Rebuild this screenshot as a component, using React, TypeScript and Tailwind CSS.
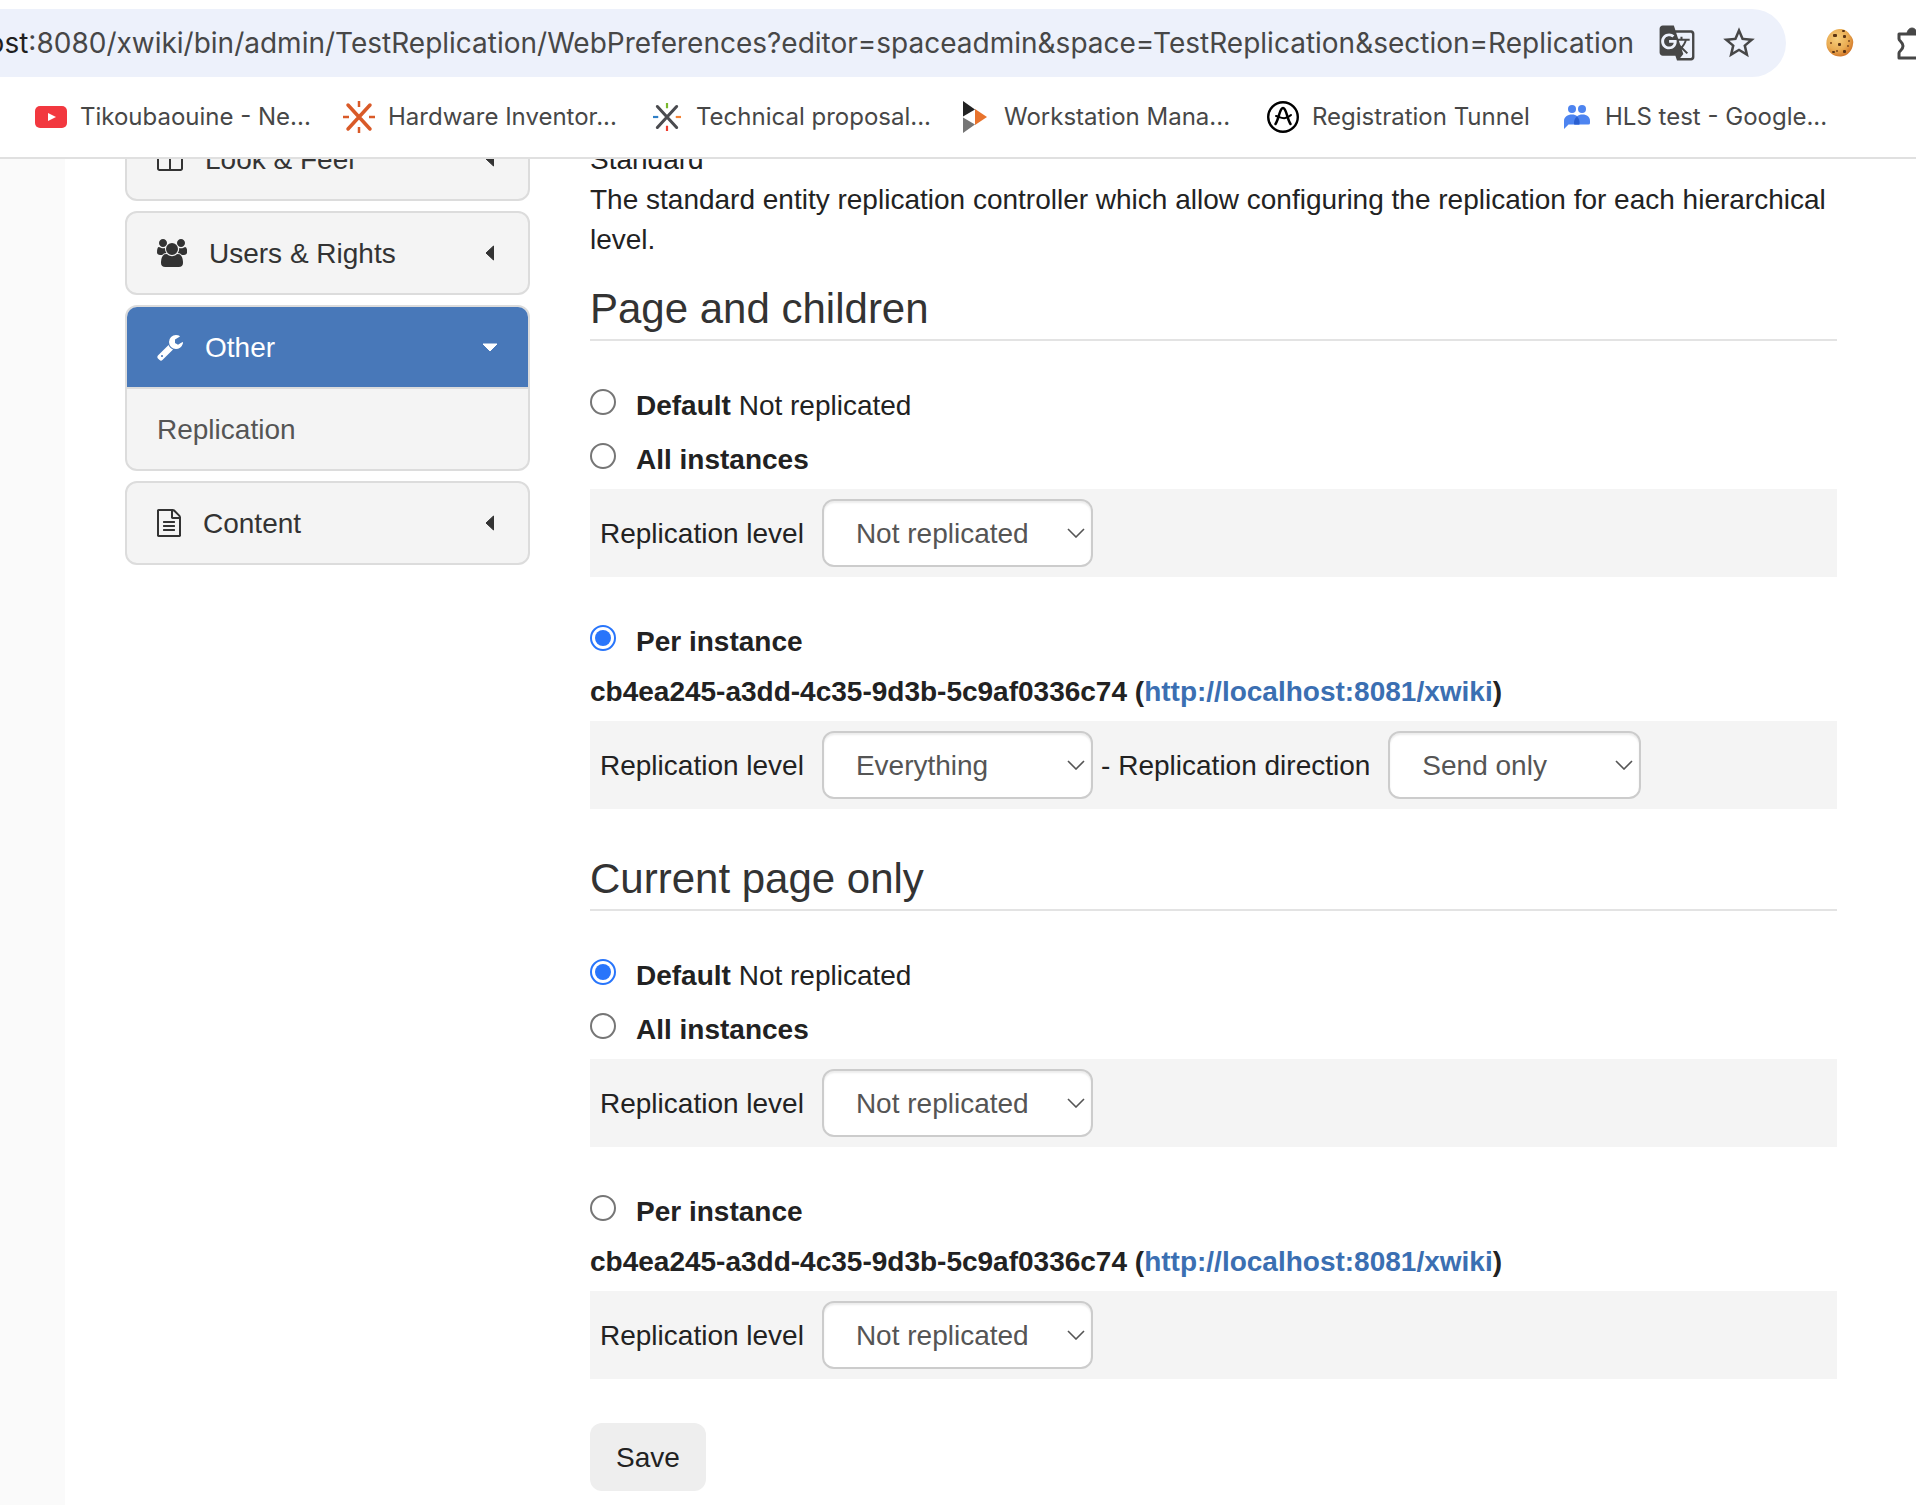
import React, { useState } from "react";
import { MdGTranslate, MdStarBorder } from "react-icons/md";

const LEVELS = ["Not replicated", "Reference", "Everything"];
const DIRECTIONS = ["Send only", "Receive only", "Both"];
const INSTANCE = "cb4ea245-a3dd-4c35-9d3b-5c9af0336c74";

const ICONS = {
  columns: {
    viewBox: "64 0 1664 1792",
    className: "h-7 w-[26px]",
    d: "M224 1536h608v-1152h-640v1120q0 13 9.5 22.5t22.5 9.5zm1376-32v-1120h-640v1152h608q13 0 22.5-9.5t9.5-22.5zm128-1216v1216q0 66-47 113t-113 47h-1344q-66 0-113-47t-47-113v-1216q0-66 47-113t113-47h1344q66 0 113 47t47 113z",
  },
  users: {
    viewBox: "64 0 1920 1792",
    className: "h-7 w-[30px]",
    d: "M657 896q-162 5-265 128h-134q-82 0-138-40.5t-56-118.5q0-353 124-353 6 0 43.5 21t97.5 42.5 119 21.5q67 0 133-23-5 37-5 66 0 159 93 256zm1071 637q0 120-73 189.5t-194 69.5h-874q-121 0-194-69.5t-73-189.5q0-53 3.5-103.5t14-109 26.5-108.5 43-97.5 62-81 85.5-53.5 111.5-20q10 0 43 21.5t73 48 107 48 135 21.5 135-21.5 107-48 73-48 43-21.5q61 0 111.5 20t85.5 53.5 62 81 43 97.5 26.5 108.5 14 109 3.5 103.5zm-1024-1277q0 106-75 181t-181 75-181-75-75-181 75-181 181-75 181 75 75 181zm704 384q0 159-112.5 271.5t-271.5 112.5-271.5-112.5-112.5-271.5 112.5-271.5 271.5-112.5 271.5 112.5 112.5 271.5zm576 225q0 78-56 118.5t-138 40.5h-134q-103-123-265-128 93-97 93-256 0-29-5-66 66 23 133 23 59 0 119-21.5t97.5-42.5 43.5-21q124 0 124 353zm-128-609q0 106-75 181t-181 75-181-75-75-181 75-181 181-75 181 75 75 181z",
  },
  wrench: {
    viewBox: "64 0 1664 1792",
    className: "h-7 w-[26px]",
    d: "M448 1472q0-26-19-45t-45-19-45 19-19 45 19 45 45 19 45-19 19-45zm644-420l-682 682q-37 37-90 37-52 0-91-37l-106-108q-38-36-38-90 0-53 38-91l681-681q39 98 114.5 173.5t173.5 114.5zm634-435q0 39-23 106-47 134-164.5 217.5t-258.5 83.5q-185 0-316.5-131.5t-131.5-316.5 131.5-316.5 316.5-131.5q58 0 121.5 16.5t107.5 46.5q16 11 16 28t-16 28l-293 169v224l193 107q5-3 79-48.5t135.5-81 70.5-35.5q15 0 23.5 10t8.5 25z",
  },
  file: {
    viewBox: "128 0 1536 1792",
    className: "h-7 w-6",
    d: "M1596 380q28 28 48 76t20 88v1152q0 40-28 68t-68 28h-1344q-40 0-68-28t-28-68v-1600q0-40 28-68t68-28h896q40 0 88 20t76 48zm-444-244v376h376q-10-29-22-41l-313-313q-12-12-41-22zm384 1528v-1024h-416q-40 0-68-28t-28-68v-416h-768v1536h1280zm-1024-864q0-14 9-23t23-9h704q14 0 23 9t9 23v64q0 14-9 23t-23 9h-704q-14 0-23-9t-9-23v-64zm736 224q14 0 23 9t9 23v64q0 14-9 23t-23 9h-704q-14 0-23-9t-9-23v-64q0-14 9-23t23-9h704zm0 256q14 0 23 9t9 23v64q0 14-9 23t-23 9h-704q-14 0-23-9t-9-23v-64q0-14 9-23t23-9h704z",
  },
};

function YoutubeIcon() {
  return (
    <svg viewBox="0 0 32 32" className="size-8">
      <rect y="5" width="32" height="22" rx="5" fill="#f2383f" />
      <path d="M13 12l8 4-8 4z" fill="#fff" />
    </svg>
  );
}

type SparkProps = { cross: string; top: string; right: string; bottom: string; left: string; className: string };

function SparkIcon({ cross, top, right, bottom, left, className }: SparkProps) {
  return (
    <svg viewBox="0 0 32 32" className={className} fill="none" strokeLinecap="round">
      <path d="M5 4l22 24M27 4L5 28" stroke={cross} strokeWidth="3.500" />
      <g strokeWidth="2.500" strokeLinecap="butt">
        <path d="M16 0v6" stroke={top} />
        <path d="M26 16h6" stroke={right} />
        <path d="M16 26v6" stroke={bottom} />
        <path d="M0 16h6" stroke={left} />
      </g>
    </svg>
  );
}

function PlayIcon() {
  return (
    <svg viewBox="0 0 32 32" className="size-8">
      <path d="M4 0l12 8.500-12 7z" fill="#222" />
      <path d="M4 16.500l12 7-12 8.500z" fill="#757575" />
      <path d="M16 8l12 8-12 8z" fill="#e8732c" />
    </svg>
  );
}

function CircleAIcon() {
  return (
    <svg viewBox="0 0 32 32" className="size-8" fill="none" stroke="#000" strokeLinecap="round" strokeLinejoin="round">
      <circle cx="16" cy="16" r="14.800" strokeWidth="2.400" />
      <path d="M8.500 23C12 18 12.500 7 16 7s4 11 7.500 16" strokeWidth="2.600" />
      <path d="M9 15c4 1 9 5 15-1" strokeWidth="2" />
    </svg>
  );
}

function PeopleIcon() {
  return (
    <svg viewBox="0 0 32 32" className="size-8" fill="#4d84f0">
      <circle cx="12" cy="8" r="4" />
      <circle cx="22" cy="8" r="4" />
      <path d="M4 28v-8c0-4 3.500-6.500 8-6.500s7 2.500 7 6.500v3.500H8.500z" />
      <path d="M15 23.500v-3.500c0-4 3-6.500 7.500-6.500s7.500 2.500 7.500 6.500v2q0 1.500-1.500 1.500z" />
      <path d="M14 23.500q-.5-5.500 3-8 3 2.500 2.500 8z" fill="#2a5fd0" />
    </svg>
  );
}

function CookieIcon() {
  return (
    <svg viewBox="0 0 28 28" className="size-7">
      <defs>
        <radialGradient id="cookie" cx=".4" cy=".35" r=".7">
          <stop offset="0" stopColor="#f7cf7d" />
          <stop offset=".6" stopColor="#e9ab52" />
          <stop offset="1" stopColor="#cf6f22" />
        </radialGradient>
      </defs>
      <path d="M13 0c5-.5 9 2 11 6 2 2 4 5 3 9-.5 6-5 12-12 12.500C8 28 1 23 .5 16-.5 8 5 1 13 0z" fill="url(#cookie)" />
      <g fill="#5b3413">
        <rect x="7" y="5" width="4" height="3" rx="1" />
        <rect x="17" y="6" width="3" height="3" rx="1" />
        <rect x="12" y="14" width="3" height="3" rx="1" />
        <rect x="17" y="21" width="3" height="3" rx="1" />
        <rect x="6" y="22" width="3" height="2" rx="1" />
        <rect x="16" y="1" width="3" height="2" rx="1" />
      </g>
      <g fill="#96602a">
        <rect x="4" y="13" width="2" height="2" />
        <rect x="22" y="11" width="2" height="2" />
        <rect x="21" y="16" width="2" height="2" />
        <rect x="10" y="21" width="2" height="2" />
      </g>
    </svg>
  );
}

function PuzzleIcon() {
  return (
    <svg viewBox="0 0 40 40" className="size-10" fill="none" stroke="#474747" strokeWidth="3">
      <path d="M9 11h24v24H9v-5c0-2 4-3 4-7s-4-5-4-7z" strokeLinejoin="round" />
      <path d="M17 11a5 6 0 0 1 10 0z" fill="#474747" strokeWidth="1" />
    </svg>
  );
}

const BOOKMARKS = [
  { title: "Tikoubaouine - Ne...", icon: <YoutubeIcon />, className: "w-[276px]" },
  {
    title: "Hardware Inventor...",
    icon: <SparkIcon cross="#d95a28" top="#d95a28" right="#d95a28" bottom="#d95a28" left="#d95a28" className="size-8" />,
    className: "w-[276px]",
  },
  {
    title: "Technical proposal...",
    icon: <SparkIcon cross="#4a4b4f" top="#7ab92d" right="#f58233" bottom="#ef3b2d" left="#2f7fc6" className="m-0.5 size-7" />,
    className: "w-[276px]",
  },
  { title: "Workstation Mana...", icon: <PlayIcon />, className: "w-[276px]" },
  { title: "Registration Tunnel", icon: <CircleAIcon />, className: "w-[261px]" },
  { title: "HLS test - Google...", icon: <PeopleIcon />, className: "w-[276px]" },
];

function BrowserBar() {
  return (
    <header className="w-full overflow-hidden border-b-2 border-[#e0e0e0] bg-white font-[Inter,sans-serif] text-[#474747]">
      <div className="flex items-center pt-[9px]">
        <div className="mr-10 flex h-[68px] min-w-0 flex-1 items-center justify-end rounded-r-full bg-[#edf1fb] pr-7">
          <div className="flex min-w-0 flex-1 justify-end overflow-hidden whitespace-nowrap text-[28px]">
            <span className="text-[#1f1f1f]">ost</span>
            <span>:8080/xwiki/bin/admin/TestReplication/WebPreferences?editor=spaceadmin&amp;space=TestReplication&amp;section=Replication</span>
          </div>
          <button type="button" aria-label="Translate" className="ml-6">
            <MdGTranslate size={38} />
          </button>
          <button type="button" aria-label="Bookmark" className="ml-6">
            <MdStarBorder size={38} />
          </button>
        </div>
        <button type="button" aria-label="Cookies" className="shrink-0">
          <CookieIcon />
        </button>
        <button type="button" aria-label="Extensions" className="-mr-[14px] ml-9 shrink-0">
          <PuzzleIcon />
        </button>
      </div>
      <nav className="flex h-20 items-center gap-8 pl-[35px]">
        {BOOKMARKS.map((b) => (
          <a key={b.title} href="#" className={`flex shrink-0 items-center gap-[13px] whitespace-nowrap text-2xl [&>svg]:shrink-0 ${b.className}`}>
            {b.icon}
            {b.title}
          </a>
        ))}
      </nav>
    </header>
  );
}

function Caret({ open }: { open?: boolean }) {
  return (
    <svg viewBox="0 0 16 16" className="ml-auto size-4" fill="currentColor" stroke="currentColor" strokeLinejoin="round">
      {open ? <path d="M1 5h14l-7 7z" /> : <path d="M11.500 1v14L4 8z" />}
    </svg>
  );
}

function MenuPanel({ icon, title, open, children }: { icon: keyof typeof ICONS; title: string; open?: boolean; children?: React.ReactNode }) {
  const { viewBox, d, className } = ICONS[icon];
  return (
    <section className="overflow-hidden rounded-xl border-2 border-[#dcdcdc] bg-[#f4f4f4]">
      <h2>
        <button
          type="button"
          aria-expanded={!!open}
          className={`flex h-20 w-full items-center px-[30px] ${open ? "bg-[#4878b9] text-white" : "text-[#333]"}`}
        >
          <svg viewBox={viewBox} className={`mr-[22px] shrink-0 ${className}`} fill="currentColor">
            <path d={d} />
          </svg>
          <span className="pt-0.5">{title}</span>
          <Caret open={open} />
        </button>
      </h2>
      {children}
    </section>
  );
}

function Sidebar() {
  return (
    <aside className="-mt-[42px] flex w-[405px] shrink-0 flex-col gap-[10px]">
      <MenuPanel icon="columns" title="Look & Feel" />
      <MenuPanel icon="users" title="Users & Rights" />
      <MenuPanel icon="wrench" title="Other" open>
        <a href="#" className="flex h-[82px] items-center border-t-2 border-[#dcdcdc] pt-0.5 pl-[30px] text-[#555]">
          Replication
        </a>
      </MenuPanel>
      <MenuPanel icon="file" title="Content" />
    </aside>
  );
}

function SelectField({ label, options, value, className }: { label: string; options: string[]; value: string; className: string }) {
  return (
    <label className="flex items-center">
      <span className="pt-0.5">{label}</span>
      <span className={`relative ml-[18px] ${className}`}>
        <select
          defaultValue={value}
          className="h-[68px] w-full appearance-none rounded-xl border-2 border-[#ccc] bg-white pt-0.5 pl-8 text-[#555] shadow-[inset_0_2px_2px_rgba(0,0,0,0.08)]"
        >
          {options.map((o) => (
            <option key={o}>{o}</option>
          ))}
        </select>
        <svg viewBox="0 0 18 10" className="pointer-events-none absolute top-[29px] right-2 h-[10px] w-[18px]" fill="none" stroke="#555" strokeWidth="1.600">
          <path d="M1 1l8 8 8-8" />
        </svg>
      </span>
    </label>
  );
}

function Option({ name, value, current, onPick, children }: { name: string; value: string; current: string; onPick: (v: string) => void; children: React.ReactNode }) {
  return (
    <label className="flex h-10 items-start gap-5">
      <input
        type="radio"
        name={name}
        checked={current === value}
        onChange={() => onPick(value)}
        className="mt-[3px] size-[26px] shrink-0 appearance-none rounded-full border-2 border-[#767676] bg-white bg-clip-content p-[3px] checked:border-[#2875fb] checked:bg-[#2875fb]"
      />
      <span>{children}</span>
    </label>
  );
}

function LevelBar({ level, direction }: { level: string; direction?: string }) {
  return (
    <div className="mt-[9px] flex h-[88px] items-center bg-[#f4f4f4] pl-[10px]">
      <SelectField label="Replication level" options={LEVELS} value={level} className="w-[271px]" />
      {direction && (
        <>
          <span className="mx-2 pt-0.5">-</span>
          <SelectField label="Replication direction" options={DIRECTIONS} value={direction} className="w-[253px]" />
        </>
      )}
    </div>
  );
}

type ScopeProps = { id: string; title: string; initial: string; level: string; direction?: string; className: string };

function Scope({ id, title, initial, level, direction, className }: ScopeProps) {
  const [mode, setMode] = useState(initial);
  const radio = { name: id, current: mode, onPick: setMode };
  return (
    <section className={className}>
      <h2 className="mb-[45px] border-b-2 border-[#e3e3e3] pb-[7px] text-[42px] leading-[46px] text-[#333]">{title}</h2>
      <div className="flex flex-col gap-[14px]">
        <Option value="default" {...radio}>
          <strong>Default</strong> Not replicated
        </Option>
        <Option value="all" {...radio}>
          <strong>All instances</strong>
        </Option>
      </div>
      <LevelBar level="Not replicated" />
      <div className="mt-[45px]">
        <Option value="instance" {...radio}>
          <strong>Per instance</strong>
        </Option>
      </div>
      <p className="mt-[10px] font-bold">
        {INSTANCE} (
        <a href="#" className="text-[#3b6fb2]">
          http://localhost:8081/xwiki
        </a>
        )
      </p>
      <LevelBar level={level} direction={direction} />
    </section>
  );
}

export default function App() {
  return (
    <div className="flex min-h-screen flex-col bg-white">
      <BrowserBar />
      <div className="flex flex-1 overflow-hidden font-['Liberation_Sans',Arial,sans-serif] text-[28px] leading-10 text-[#222]">
        <div className="w-[65px] shrink-0 bg-[#fafafa]" />
        <div className="flex min-w-0 flex-1 gap-[60px] pr-[79px] pl-[60px]">
          <Sidebar />
          <main className="-mt-[19px] min-w-0 flex-1">
            <p>Standard</p>
            <p>The standard entity replication controller which allow configuring the replication for each hierarchical level.</p>
            <Scope id="children" title="Page and children" initial="instance" level="Everything" direction="Send only" className="mt-[26px]" />
            <Scope id="page" title="Current page only" initial="default" level="Not replicated" className="mt-[47px]" />
            <button type="button" className="mt-11 h-[68px] rounded-xl bg-[#eee] px-[26px] pt-0.5">
              Save
            </button>
          </main>
        </div>
      </div>
    </div>
  );
}
